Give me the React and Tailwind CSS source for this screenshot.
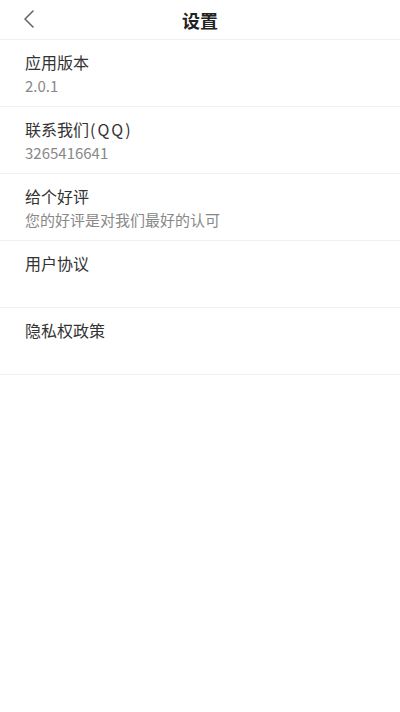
const items = [
  { title: '应用版本', sub: '2.0.1' },
  { title: '联系我们', extra: '(QQ)', sub: '3265416641' },
  { title: '给个好评', sub: '您的好评是对我们最好的认可' },
  { title: '用户协议', sub: '' },
  { title: '隐私权政策', sub: '' },
];

export default function App() {
  return (
    <div
      className="w-[400px] h-[712px] bg-white"
      style={{ fontFamily: '"Noto Sans CJK SC", "Noto Sans", sans-serif' }}
    >
      {/* Header */}
      <div className="relative h-[40px] flex items-center justify-center border-b border-[#efefef]">
        <button className="absolute left-[20px] top-[8px] w-[18px] h-[22px] flex items-center justify-center">
          <svg width="14" height="20" viewBox="0 0 14 20" fill="none">
            <path d="M11 2L3 10l8 8" stroke="#666" strokeWidth="1.6" strokeLinecap="round" strokeLinejoin="round" />
          </svg>
        </button>
        <span className="text-[18px] font-bold text-[#222] leading-none">设置</span>
      </div>

      {/* List */}
      <div>
        {items.map((it) => (
          <div key={it.title} className="h-[67px] px-[25px] pt-[11px] border-b border-[#f0f0f0]">
            <div className="text-[16px] leading-[22px] text-[#333]">
              {it.title}
              {it.extra && <span className="tracking-[2px] ml-[1px]">{it.extra}</span>}
            </div>
            {it.sub && (
              <div className="text-[15px] leading-[22px] mt-[2px] text-[#888]">{it.sub}</div>
            )}
          </div>
        ))}
      </div>
    </div>
  );
}
